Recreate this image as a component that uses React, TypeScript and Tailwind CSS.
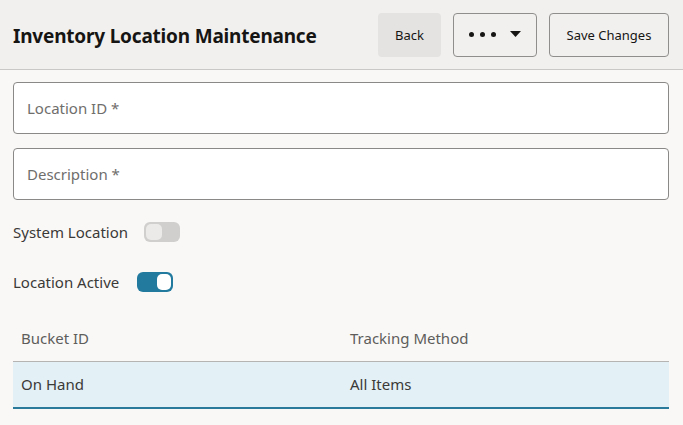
import React from "react";

export default function App() {
  return (
    <div
      className="w-[683px] h-[425px] bg-[#f9f8f7] overflow-hidden text-[#161513]"
      style={{ fontFamily: '"Noto Sans", "Open Sans", sans-serif' }}
    >
      <div className="h-[70px] bg-[#f1f0ef] border-b border-[#c9c8c6] flex items-center pl-[13px] pr-[14px]">
        <h1 className="text-[19px] font-bold tracking-[-0.2px] flex-1 pt-[3px]">Inventory Location Maintenance</h1>
        <div className="flex items-center gap-[12px]">
          <button className="h-[44px] w-[63px] rounded-[4px] bg-[#e4e3e1] text-[13px] text-[#161513] pt-[2px]">Back</button>
          <button className="h-[44px] w-[84px] rounded-[4px] border border-[#8f8e8c] bg-[#f1f0ef] flex items-center justify-center gap-[14px]">
            <span className="flex gap-[6px]">
              <span className="w-[5px] h-[5px] rounded-full bg-[#161513]" />
              <span className="w-[5px] h-[5px] rounded-full bg-[#161513]" />
              <span className="w-[5px] h-[5px] rounded-full bg-[#161513]" />
            </span>
            <svg width="11" height="7" viewBox="0 0 11 7"><path d="M0 0 L11 0 L5.5 6 Z" fill="#161513" /></svg>
          </button>
          <button className="h-[44px] w-[120px] rounded-[4px] border border-[#8f8e8c] bg-[#f1f0ef] text-[13px] text-[#161513] pt-[2px]">Save Changes</button>
        </div>
      </div>

      <div className="px-[13px] pt-[12px] pr-[14px]">
        <div className="h-[52px] bg-white border border-[#8a8987] rounded-[4px] flex items-center px-[13px] text-[15px] text-[#6f6e6c]">Location ID *</div>
        <div className="h-[52px] mt-[14px] bg-white border border-[#8a8987] rounded-[4px] flex items-center px-[13px] text-[15px] text-[#6f6e6c]">Description *</div>

        <div className="flex items-center mt-[21px] h-[22px]">
          <span className="text-[15px] text-[#3b3a38]">System Location</span>
          <span className="ml-[16px] w-[36px] h-[20px] rounded-[6px] bg-[#d0cfcd] p-[2px] flex">
            <span className="w-[16px] h-[16px] rounded-[5px] bg-[#ebeae8]" />
          </span>
        </div>

        <div className="flex items-center mt-[28px] h-[22px]">
          <span className="text-[15px] text-[#3b3a38]">Location Active</span>
          <span className="ml-[18px] w-[36px] h-[20px] rounded-[6px] bg-[#227b9f] p-[2px] flex justify-end">
            <span className="w-[14px] h-[16px] rounded-[5px] bg-white" />
          </span>
        </div>

        <div className="mt-[23px]">
          <div className="h-[46px] flex items-center border-b border-[#b5b4b2] text-[15px] text-[#5e5d5b]">
            <div className="w-[337px] pl-[8px]">Bucket ID</div>
            <div>Tracking Method</div>
          </div>
          <div className="h-[47px] flex items-center bg-[#e3f0f6] border-b-2 border-[#2a7b9b] text-[15px] text-[#3b3a38]">
            <div className="w-[337px] pl-[8px]">On Hand</div>
            <div>All Items</div>
          </div>
        </div>
      </div>
    </div>
  );
}
